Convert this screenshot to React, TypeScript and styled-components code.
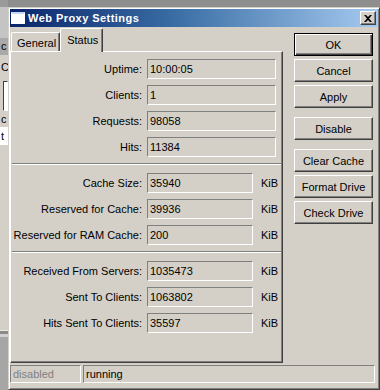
import React from 'react'
import styled, { createGlobalStyle, css } from 'styled-components'

const FACE = '#d4d0c8'

const GlobalStyle = createGlobalStyle`
  html, body { margin: 0; padding: 0; }
  body {
    width: 380px;
    height: 390px;
    overflow: hidden;
    background: #8e8e8e;
    font-family: "Liberation Sans", Arial, sans-serif;
    font-size: 11px;
    color: #000;
  }
`

const raised = css`
  border: 1px solid;
  border-color: #ffffff #404040 #404040 #ffffff;
  box-shadow: inset -1px -1px #808080;
`

const sunken = css`
  border: 1px solid;
  border-color: #808080 #ffffff #ffffff #808080;
`

const Desktop = styled.div`
  display: flex;
  width: 380px;
  height: 390px;
`

const LeftStrip = styled.div`
  width: 8px;
  flex-shrink: 0;
  display: flex;
  flex-direction: column;
  overflow: hidden;
`

const Piece = styled.div<{ $h: number; $bg: string }>`
  height: ${(p) => p.$h}px;
  background: ${(p) => p.$bg};
  font-size: 11px;
  line-height: ${(p) => p.$h}px;
  padding-left: 1px;
  color: #000;
`

const PieceBox = styled.div<{ $h: number }>`
  height: ${(p) => p.$h}px;
  background: ${FACE};
  display: flex;
  align-items: center;
`

const PieceField = styled.div`
  height: 28px;
  width: 10px;
  margin-left: 3px;
  border: 1px solid;
  border-color: #404040 #fff #fff #404040;
  background: #fff;
`

const PieceBottom = styled.div`
  flex: 1;
  background: #a6a6a6;
  border-top: 1px solid #e8e8e8;
  box-shadow: inset 0 3px #8a8a8a, inset 0 6px #d0d0d0;
`

const Window = styled.div`
  margin-top: 7px;
  width: 372px;
  height: 383px;
  box-sizing: border-box;
  background: ${FACE};
  border: 1px solid;
  border-color: ${FACE} #404040 #404040 ${FACE};
  box-shadow: inset 1px 1px #ffffff, inset -1px -1px #808080;
  padding: 1px;
  display: flex;
  flex-direction: column;
`

const TitleBar = styled.div`
  height: 18px;
  flex-shrink: 0;
  display: flex;
  align-items: center;
  padding: 0 2px 0 1px;
  background: linear-gradient(to right, #0a246a 0%, #3a6ea5 45%, #a6caf0 100%);
`

const TitleIcon = styled.div`
  width: 12px;
  height: 9px;
  background: #ffffff;
  border: 1px solid #ffffff;
  border-top: 2px solid #c4d6f0;
  margin-right: 3px;
`

const TitleText = styled.div`
  flex: 1;
  color: #ffffff;
  font-weight: bold;
  font-size: 11px;
  letter-spacing: 0.45px;
`

const CloseButton = styled.div`
  ${raised};
  width: 14px;
  height: 12px;
  background: ${FACE};
  display: flex;
  align-items: center;
  justify-content: center;
`

const Body = styled.div`
  display: flex;
  padding: 1px 5px 0 0;
`

const LeftSide = styled.div`
  width: 273px;
  display: flex;
  flex-direction: column;
`

const TabStrip = styled.div`
  height: 23px;
  display: flex;
  align-items: flex-end;
  padding-left: 1px;
  position: relative;
  z-index: 1;
`

const Tab = styled.div<{ $active?: boolean }>`
  box-sizing: border-box;
  height: ${(p) => (p.$active ? 24 : 19)}px;
  margin-bottom: ${(p) => (p.$active ? -1 : 0)}px;
  padding: ${(p) => (p.$active ? '5px 4px 0 6px' : '4px 3px 0 5px')};
  background: ${FACE};
  border-top: 1px solid #ffffff;
  border-left: 1px solid #ffffff;
  border-right: 1px solid #404040;
  box-shadow: inset -1px 0 #808080;
  border-radius: 2px 2px 0 0;
`

const Panel = styled.div`
  height: 312px;
  box-sizing: border-box;
  ${raised};
  padding: 7px 0 0 0;
  display: flex;
  flex-direction: column;
`

const Group = styled.div`
  display: flex;
  flex-direction: column;
  gap: 6px;
`

const Separator = styled.div`
  margin: 6px 1px 8px 1px;
  border-top: 1px solid #808080;
  border-bottom: 1px solid #ffffff;
`

const Row = styled.div`
  display: grid;
  grid-template-columns: 131px 1fr;
  column-gap: 5px;
  height: 20px;
  align-items: center;
`

const Label = styled.div`
  text-align: right;
  white-space: nowrap;
`

const ValueCell = styled.div`
  display: flex;
  align-items: center;
  gap: 8px;
`

const Field = styled.div<{ $unit?: boolean }>`
  ${sunken};
  box-sizing: border-box;
  width: ${(p) => (p.$unit ? 106 : 129)}px;
  height: 20px;
  line-height: 18px;
  padding-left: 2px;
  background: ${FACE};
`

const ButtonColumn = styled.div`
  margin-left: 11px;
  padding-top: 5px;
  display: flex;
  flex-direction: column;
  gap: 3px;
`

const Button = styled.div<{ $default?: boolean; $space?: number }>`
  box-sizing: border-box;
  width: 79px;
  height: 23px;
  margin-top: ${(p) => p.$space || 0}px;
  display: flex;
  align-items: center;
  justify-content: center;
  background: ${FACE};
  ${(p) =>
    p.$default
      ? css`
          border: 1px solid #000;
          box-shadow: inset 1px 1px #ffffff, inset -1px -1px #404040, inset -2px -2px #808080;
        `
      : raised};
`

const StatusBar = styled.div`
  margin-top: 2px;
  height: 18px;
  display: flex;
  gap: 2px;
  padding-right: 3px;
`

const StatusCell = styled.div<{ $width?: number; $muted?: boolean }>`
  ${sunken};
  box-sizing: border-box;
  height: 18px;
  line-height: 16px;
  padding-left: 2px;
  ${(p) => (p.$width ? `width: ${p.$width}px;` : 'flex: 1;')}
  color: ${(p) => (p.$muted ? '#808080' : '#000')};
`

type Item = { label: string; value: string; unit?: boolean }

const groups: Item[][] = [
  [
    { label: 'Uptime:', value: '10:00:05' },
    { label: 'Clients:', value: '1' },
    { label: 'Requests:', value: '98058' },
    { label: 'Hits:', value: '11384' },
  ],
  [
    { label: 'Cache Size:', value: '35940', unit: true },
    { label: 'Reserved for Cache:', value: '39936', unit: true },
    { label: 'Reserved for RAM Cache:', value: '200', unit: true },
  ],
  [
    { label: 'Received From Servers:', value: '1035473', unit: true },
    { label: 'Sent To Clients:', value: '1063802', unit: true },
    { label: 'Hits Sent To Clients:', value: '35597', unit: true },
  ],
]

const buttons = [
  { text: 'OK', def: true },
  { text: 'Cancel' },
  { text: 'Apply' },
  { text: 'Disable', space: 6 },
  { text: 'Clear Cache', space: 6 },
  { text: 'Format Drive' },
  { text: 'Check Drive' },
]

const App = () => (
  <>
    <GlobalStyle />
    <Desktop>
      <LeftStrip>
        <Piece $h={7} $bg="#9a9a9a" />
        <Piece $h={31} $bg="#c4c4c4" />
        <Piece $h={17} $bg="#a9a9a9">c</Piece>
        <Piece $h={25} $bg={FACE}>C</Piece>
        <PieceBox $h={32}>
          <PieceField />
        </PieceBox>
        <Piece $h={15} $bg={FACE}>c</Piece>
        <Piece $h={18} $bg="#ffffff">t</Piece>
        <Piece $h={185} $bg={FACE} />
        <PieceBottom />
      </LeftStrip>
      <Window>
        <TitleBar>
          <TitleIcon />
          <TitleText>Web Proxy Settings</TitleText>
          <CloseButton>
            <svg width="8" height="7" viewBox="0 0 8 7">
              <path d="M0 0h2l2 2 2-2h2L5 3.5 8 7H6L4 5 2 7H0l3-3.5z" fill="#000" />
            </svg>
          </CloseButton>
        </TitleBar>
        <Body>
          <LeftSide>
            <TabStrip>
              <Tab>General</Tab>
              <Tab $active>Status</Tab>
            </TabStrip>
            <Panel>
              {groups.map((g, gi) => (
                <React.Fragment key={gi}>
                  {gi > 0 && <Separator />}
                  <Group>
                    {g.map((it) => (
                      <Row key={it.label}>
                        <Label>{it.label}</Label>
                        <ValueCell>
                          <Field $unit={it.unit}>{it.value}</Field>
                          {it.unit && <span>KiB</span>}
                        </ValueCell>
                      </Row>
                    ))}
                  </Group>
                </React.Fragment>
              ))}
            </Panel>
          </LeftSide>
          <ButtonColumn>
            {buttons.map((b) => (
              <Button key={b.text} $default={b.def} $space={b.space}>
                {b.text}
              </Button>
            ))}
          </ButtonColumn>
        </Body>
        <StatusBar>
          <StatusCell $width={71} $muted>
            disabled
          </StatusCell>
          <StatusCell>running</StatusCell>
        </StatusBar>
      </Window>
    </Desktop>
  </>
)

export default App
